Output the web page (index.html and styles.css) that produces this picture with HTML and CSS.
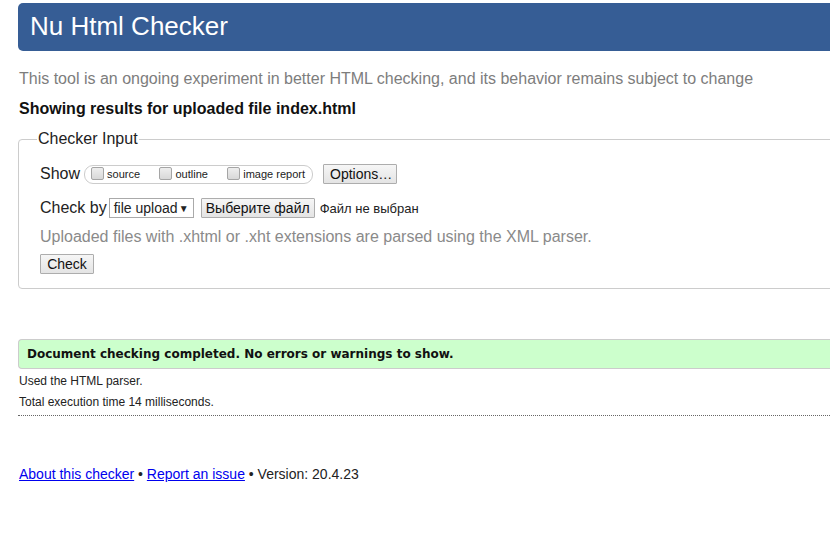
FILE: index.html
```html
<!DOCTYPE html>
<html>
<head>
<meta charset="utf-8">
<title>Nu Html Checker</title>
<link rel="stylesheet" href="styles.css">
</head>
<body>
<div class="page">
  <h1 class="header">Nu Html Checker</h1>
  <p class="tagline">This tool is an ongoing experiment in better HTML checking, and its behavior remains subject to change</p>
  <p class="showing">Showing results for uploaded file index.html</p>
  <fieldset class="input">
    <legend>Checker Input</legend>
    <div class="row">
      <span class="lbl">Show</span>
      <span class="pill">
        <label class="cb"><input type="checkbox"><span>source</span></label>
        <label class="cb"><input type="checkbox"><span>outline</span></label>
        <label class="cb"><input type="checkbox"><span>image report</span></label>
      </span>
      <button class="btn options">Options…</button>
    </div>
    <div class="row row2">
      <span class="lbl lbl2">Check by</span>
      <span class="select">file upload <span class="arrow">▼</span></span>
      <button class="btn file">Выберите файл</button>
      <span class="nofile">Файл не выбран</span>
    </div>
    <p class="hint">Uploaded files with .xhtml or .xht extensions are parsed using the XML parser.</p>
    <button class="btn check">Check</button>
  </fieldset>
  <p class="success">Document checking completed. No errors or warnings to show.</p>
  <p class="stat stat-first">Used the HTML parser.</p>
  <p class="stat stat-second">Total execution time 14 milliseconds.</p>
  <div class="sep"></div>
  <p class="footer"><a href="#">About this checker</a> • <a href="#">Report an issue</a> • Version: 20.4.23</p>
</div>
</body>
</html>
```
FILE: styles.css
```css
html, body {
  margin: 0;
  padding: 0;
  overflow: hidden;
  background: #fff;
}
body {
  font-family: "Liberation Sans", Arial, sans-serif;
  color: #222;
}
.page {
  width: 860px;
  padding: 3px 0 0 18px;
}
.header {
  margin: 0;
  height: 48px;
  line-height: 46px;
  padding-left: 12px;
  background: #365d95;
  color: #fff;
  font-weight: normal;
  font-size: 26px;
  border-radius: 5px 0 0 5px;
}
.tagline {
  margin: 19px 0 0 1px;
  font-size: 16px;
  line-height: 18px;
  color: #7d7d7d;
}
.showing {
  margin: 12px 0 0 1px;
  font-size: 16px;
  line-height: 18px;
  font-weight: bold;
  color: #111;
}
.input {
  margin: 12px 0 0 0;
  padding: 16px 0 14px 21px;
  border: 1px solid #ccc;
  border-radius: 4px;
  min-width: 0;
}
.input legend {
  font-size: 16px;
  line-height: 18px;
  padding: 0 1px;
  margin-left: -3px;
  color: #222;
}
.row {
  display: flex;
  align-items: center;
  height: 20px;
}
.row2 {
  margin-top: 14px;
}
.lbl {
  font-size: 16px;
  margin-right: 4px;
}
.lbl2 {
  margin-right: 2px;
}
.pill {
  display: inline-flex;
  align-items: center;
  height: 17px;
  border: 1px solid #ccc;
  border-radius: 9px;
  padding: 0 7px 0 6px;
  width: 214px;
  justify-content: space-between;
  box-sizing: content-box;
}
.cb {
  display: inline-flex;
  align-items: center;
  font-size: 11px;
}
.cb input {
  appearance: none;
  -webkit-appearance: none;
  width: 13px;
  height: 13px;
  margin: -2px 3px 0 0;
  border: 1px solid #a5a5a5;
  border-radius: 2px;
  background: linear-gradient(#eee, #d8d8d8);
}
.btn {
  font-family: "Liberation Sans", Arial, sans-serif;
  font-size: 14px;
  color: #111;
  height: 20px;
  padding: 0 6px;
  border: 1px solid #adadad;
  border-radius: 1px;
  background: linear-gradient(#f6f6f6, #e4e4e4);
  line-height: 18px;
  white-space: nowrap;
}
.options {
  margin-left: 10px;
  width: 74px;
}
.select {
  display: inline-flex;
  align-items: center;
  height: 18px;
  border: 1px solid #aaa;
  padding: 0 4px;
  font-size: 14px;
  width: 75px;
  justify-content: space-between;
  white-space: nowrap;
}
.arrow {
  font-size: 10px;
}
.file {
  margin-left: 7px;
  width: 114px;
  padding: 0 4px;
}
.nofile {
  font-size: 13px;
  margin-left: 5px;
  white-space: nowrap;
}
.hint {
  margin: 10px 0 0 0;
  font-size: 16px;
  line-height: 18px;
  color: #8a8a8a;
}
.check {
  margin-top: 8px;
  width: 54px;
  height: 20px;
  display: block;
}
.success {
  margin: 50px 0 0 0;
  height: 28px;
  line-height: 28px;
  padding-left: 8px;
  background: #ccffcc;
  border: 1px solid #ccc;
  border-right: none;
  border-radius: 4px 0 0 4px;
  font-family: "DejaVu Sans", Verdana, sans-serif;
  font-weight: bold;
  font-size: 12px;
  color: #111;
}
.stat {
  margin: 0 0 0 1px;
  font-size: 12px;
  line-height: 20px;
  color: #222;
}
.stat-first {
  margin-top: 2px;
}
.stat-second {
  margin-top: 1px;
}
.sep {
  margin-top: 3px;
  border-top: 1px dotted #666;
}
.footer {
  margin: 49px 0 0 1px;
  font-size: 14px;
  line-height: 18px;
  color: #222;
}
.footer a {
  color: #0000ee;
}
```
